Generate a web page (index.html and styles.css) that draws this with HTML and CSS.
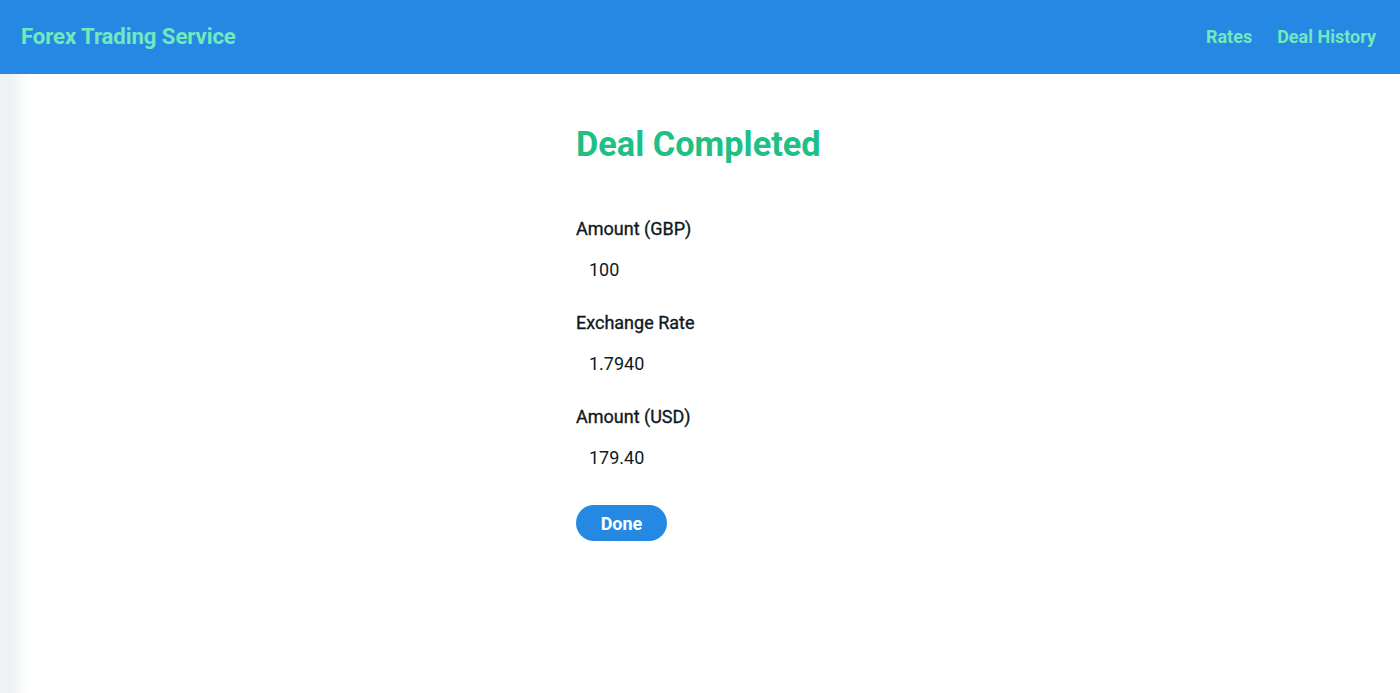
FILE: index.html
```html
<!DOCTYPE html>
<html>
<head>
<meta charset="utf-8">
<link rel="stylesheet" href="styles.css">
</head>
<body>
<header class="topbar">
  <div class="brand">Forex Trading Service</div>
  <nav class="nav">
    <a class="nav-link" href="#">Rates</a>
    <a class="nav-link" href="#">Deal History</a>
  </nav>
</header>
<main class="page">
  <section class="deal">
    <h1 class="deal-title">Deal Completed</h1>
    <div class="field">
      <div class="field-label">Amount (GBP)</div>
      <div class="field-value">100</div>
    </div>
    <div class="field">
      <div class="field-label">Exchange Rate</div>
      <div class="field-value">1.7940</div>
    </div>
    <div class="field">
      <div class="field-label">Amount (USD)</div>
      <div class="field-value">179.40</div>
    </div>
    <button class="btn-done">Done</button>
  </section>
</main>
</body>
</html>
```
FILE: styles.css
```css
html, body {
  margin: 0;
  padding: 0;
  height: 100%;
}
body {
  font-family: Roboto, "Liberation Sans", sans-serif;
  background: linear-gradient(to right, #eef2f3 0px, #eef2f3 10px, #f6f8f9 20px, #ffffff 30px);
  color: #111;
}
.topbar {
  height: 74px;
  background: #2589e3;
  display: flex;
  align-items: center;
  justify-content: space-between;
  padding: 0 24px 2px 21px;
  box-sizing: border-box;
}
.brand {
  color: #72e8bc;
  font-weight: 700;
  font-size: 22.2px;
  letter-spacing: -0.1px;
}
.nav {
  display: flex;
  gap: 25px;
}
.nav-link {
  color: #72e8bc;
  font-weight: 700;
  font-size: 18px;
  text-decoration: none;
}
.page {
  display: flex;
  justify-content: center;
}
.deal {
  width: 248px;
  padding-top: 50px;
}
.deal-title {
  margin: 0 0 55px 0;
  font-size: 34.3px;
  font-weight: 700;
  color: #20bf85;
  line-height: 40px;
}
.field {
  margin-bottom: 33px;
}
.field-label {
  font-size: 18px;
  font-weight: 400;
  -webkit-text-stroke: 0.35px #0e1a22;
  color: #0e1a22;
  line-height: 20px;
  margin-bottom: 21px;
}
.field-value {
  font-size: 18px;
  color: #0e1a22;
  padding-left: 13px;
  line-height: 20px;
}
.btn-done {
  margin-top: 4px;
  width: 91px;
  height: 36px;
  border: none;
  border-radius: 18px;
  background: #2589e3;
  color: #fff;
  font-family: Roboto, "Liberation Sans", sans-serif;
  font-size: 18px;
  font-weight: 700;
  cursor: pointer;
}
```
